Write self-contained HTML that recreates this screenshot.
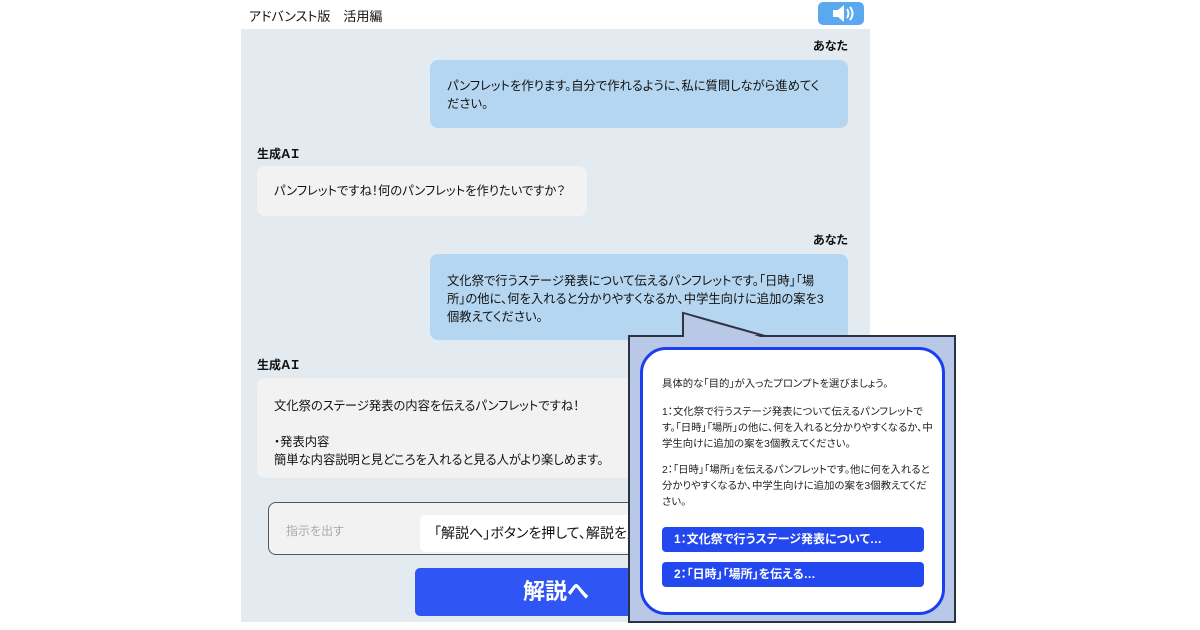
<!DOCTYPE html>
<html><head><meta charset="utf-8"><style>
*{margin:0;padding:0;box-sizing:border-box}
body{width:1200px;height:630px;background:#fff;position:relative;overflow:hidden;font-family:"Liberation Sans","Noto Sans CJK JP",sans-serif;color:#111;font-feature-settings:"palt";white-space:nowrap}
.a{position:absolute}
.panel{left:241px;top:29px;width:629px;height:593px;background:#e3ebf0}
.b{position:absolute;border-radius:8px;font-size:12.3px;line-height:18px;padding:0;overflow:hidden}
.me{background:#b5d6f0}
.ai{background:#f2f2f2}
.lbl{position:absolute;font-size:12px;font-weight:bold}
.pt{font-size:10.4px;line-height:16px;position:absolute;left:662px;color:#222}
.pb{position:absolute;left:662px;width:262px;height:25px;background:#2448f0;border-radius:4px;color:#fff;font-weight:bold;font-size:12px;line-height:25px;padding-left:12px}
</style></head><body>
<div class="a" style="left:249px;top:6px;font-size:13px">アドバンスト版　活用編</div>
<div class="a" style="left:818px;top:2px;width:46px;height:23px;background:#5aa8f0;border-radius:5px">
<svg width="46" height="23" viewBox="0 0 46 23"><path d="M15 8h5l6-5v17l-6-5h-5z" fill="#fff"/><path d="M29 7q3 4.5 0 9M32 5q5 6.5 0 13" stroke="#fff" stroke-width="2" fill="none"/></svg></div>
<div class="a panel"></div>
<div class="lbl" style="right:352px;top:37px">あなた</div>
<div class="b me" style="left:430px;top:60px;width:418px;height:68px;padding:17px 17px"><div>パンフレットを作ります。自分で作れるように、私に質問しながら進めてく<br>ださい。</div></div>
<div class="lbl" style="left:257px;top:145px">生成ＡＩ</div>
<div class="b ai" style="left:257px;top:166px;width:330px;height:50px;padding:16px 17px">パンフレットですね！何のパンフレットを作りたいですか？</div>
<div class="lbl" style="right:352px;top:231px">あなた</div>
<div class="b me" style="left:430px;top:254px;width:418px;height:86px;padding:18px 17px">文化祭で行うステージ発表について伝えるパンフレットです。「日時」「場<br>所」の他に、何を入れると分かりやすくなるか、中学生向けに追加の案を3<br>個教えてください。</div>
<div class="lbl" style="left:257px;top:356px">生成ＡＩ</div>
<div class="b ai" style="left:257px;top:378px;width:400px;height:100px;padding:19px 17px">文化祭のステージ発表の内容を伝えるパンフレットですね！<br><br>・発表内容<br>簡単な内容説明と見どころを入れると見る人がより楽しめます。</div>
<div class="a" style="left:268px;top:502px;width:400px;height:53px;border:1.5px solid #555;border-radius:8px;background:#f2f2f2"></div>
<div class="a" style="left:286px;top:522px;font-size:12px;color:#aaa">指示を出す</div>
<div class="a" style="left:420px;top:515px;width:240px;height:37px;background:#fff;border-radius:5px;font-size:14px;line-height:37px;padding-left:14px;overflow:hidden">「解説へ」ボタンを押して、解説を見よう</div>
<div class="a" style="left:415px;top:568px;width:240px;height:48px;background:#2f55f5;border-radius:5px;color:#fff;font-weight:bold;font-size:22px;line-height:48px;padding-left:108px">解説へ</div>
<svg class="a" style="left:620px;top:308px" width="160" height="40"><polygon points="63,5 63,28 145,28" fill="#b8c8e6" stroke="#334" stroke-width="2"/></svg>
<div class="a" style="left:628px;top:335px;width:328px;height:288px;background:#b8c8e6;border:2px solid #2a3344"></div>
<svg class="a" style="left:680px;top:312px" width="90" height="30"><polygon points="4,2 4,26 84,26" fill="#b8c8e6"/></svg>
<div class="a" style="left:640px;top:347px;width:305px;height:268px;background:#fff;border:3px solid #1a3ff0;border-radius:26px"></div>
<div class="pt" style="top:377px">具体的な「目的」が入ったプロンプトを選びましょう。</div>
<div class="pt" style="top:405px">1：文化祭で行うステージ発表について伝えるパンフレットで<br>す。「日時」「場所」の他に、何を入れると分かりやすくなるか、中<br>学生向けに追加の案を3個教えてください。</div>
<div class="pt" style="top:463px">2：「日時」「場所」を伝えるパンフレットです。他に何を入れると<br>分かりやすくなるか、中学生向けに追加の案を3個教えてくだ<br>さい。</div>
<div class="pb" style="top:527px">1：文化祭で行うステージ発表について…</div>
<div class="pb" style="top:562px">2：「日時」「場所」を伝える…</div>
</body></html>
